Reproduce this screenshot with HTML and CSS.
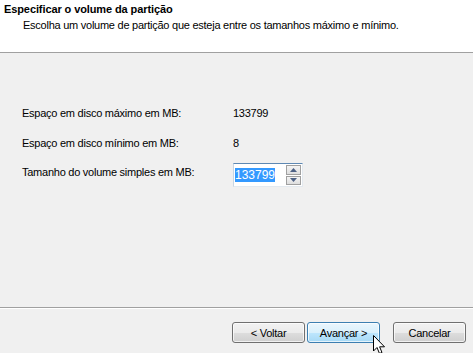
FILE: index.html
```html
<!DOCTYPE html>
<html lang="pt-BR">
<head>
  <meta charset="UTF-8">
  <title>Especificar o volume da partição</title>
  <link rel="stylesheet" href="styles.css">
</head>
<body>
  <div class="janela">
    <header class="cabecalho">
      <h1>Especificar o volume da partição</h1>
      <p>Escolha um volume de partição que esteja entre os tamanhos máximo e mínimo.</p>
    </header>

    <main class="conteudo">
      <div class="linha">
        <span class="rotulo">Espaço em disco máximo em MB:</span>
        <span class="valor">133799</span>
      </div>
      <div class="linha">
        <span class="rotulo">Espaço em disco mínimo em MB:</span>
        <span class="valor">8</span>
      </div>
      <div class="linha linha-campo">
        <span class="rotulo">Tamanho do volume simples em MB:</span>
        <div class="spin">
          <div class="spin-texto"><span class="selecionado">133799</span></div>
          <div class="spin-botoes">
            <span class="spin-btn">
              <svg width="7" height="4" viewBox="0 0 7 4"><path d="M0 4 L3.5 0 L7 4 Z" fill="#4d6185"/></svg>
            </span>
            <span class="spin-btn">
              <svg width="7" height="4" viewBox="0 0 7 4"><path d="M0 0 L3.5 4 L7 0 Z" fill="#4d6185"/></svg>
            </span>
          </div>
        </div>
      </div>
    </main>

    <footer class="rodape">
      <button class="botao">&lt; Voltar</button>
      <button class="botao ativo">Avançar &gt;</button>
      <button class="botao cancelar">Cancelar</button>
      <svg class="cursor" width="13" height="20" viewBox="0 0 13 20">
        <path d="M0.5 0.5 L0.5 16 L4 12.5 L6.5 18.5 L9 17.5 L6.6 11.8 L11.5 11.8 Z" fill="#fff" stroke="#000" stroke-width="1" stroke-linejoin="miter"/>
      </svg>
    </footer>
  </div>
</body>
</html>
```

FILE: styles.css
```css
* {
  box-sizing: border-box;
}
body {
  margin: 0;
  font-family: "Liberation Sans", Arial, sans-serif;
  font-size: 11px;
  letter-spacing: -0.25px;
  color: #000;
  background: #f0f0f0;
}
.janela {
  width: 473px;
  height: 353px;
  display: flex;
  flex-direction: column;
  position: relative;
}
.cabecalho {
  height: 53px;
  background: #fff;
  border-bottom: 1px solid #a0a0a0;
  padding: 3px 0 0 4px;
}
.cabecalho h1 {
  margin: 0;
  font-size: 11px;
  font-weight: bold;
  line-height: 13px;
  letter-spacing: -0.1px;
}
.cabecalho p {
  margin: 3px 0 0 19px;
  line-height: 13px;
}
.conteudo {
  flex: 1;
  padding: 53px 0 0 22px;
}
.linha {
  display: flex;
  align-items: center;
  height: 14px;
  margin-bottom: 16px;
}
.rotulo {
  width: 211px;
}
.linha-campo {
  height: 24px;
  margin-top: -3px;
  align-items: flex-start;
}
.linha-campo .rotulo {
  margin-top: 3px;
}
.spin {
  width: 70px;
  height: 24px;
  display: flex;
  background: #fff;
  border: 1px solid #e3e9ef;
  border-top-color: #5e88b3;
  border-left-color: #c7d6e4;
}
.spin-texto {
  flex: 1;
  padding: 3px 0 0 1px;
  font-size: 12px;
  letter-spacing: 0;
  line-height: 16px;
}
.selecionado {
  background: #3399ff;
  color: #fff;
}
.spin-botoes {
  width: 16px;
  display: flex;
  flex-direction: column;
  gap: 1px;
  padding: 1px 1px 1px 0;
}
.spin-btn {
  flex: 1;
  display: flex;
  align-items: center;
  justify-content: center;
  border: 1px solid #a0a0a0;
  background: linear-gradient(#f4f4f4, #dedede);
}
.rodape {
  height: 46px;
  border-top: 1px solid #a0a0a0;
  box-shadow: inset 0 1px 0 #fff;
  display: flex;
  align-items: flex-start;
  padding: 14px 0 0 232px;
  position: relative;
}
.botao {
  width: 73px;
  height: 21px;
  margin: 0 2px 0 0;
  padding: 0;
  font-family: inherit;
  font-size: 11px;
  letter-spacing: -0.25px;
  color: #000;
  border: 1px solid #707070;
  border-radius: 3px;
  background: linear-gradient(#f2f2f2 0%, #ebebeb 50%, #dddddd 51%, #cfcfcf 100%);
  box-shadow: inset 0 0 0 1px rgba(255, 255, 255, 0.7);
}
.botao.ativo {
  border-color: #3c7fb1;
  background: linear-gradient(#eaf6fd 0%, #d9f0fc 50%, #bee6fd 51%, #a7d9f5 100%);
}
.botao.cancelar {
  margin-left: 11px;
}
.cursor {
  position: absolute;
  left: 373px;
  top: 27px;
}
```
